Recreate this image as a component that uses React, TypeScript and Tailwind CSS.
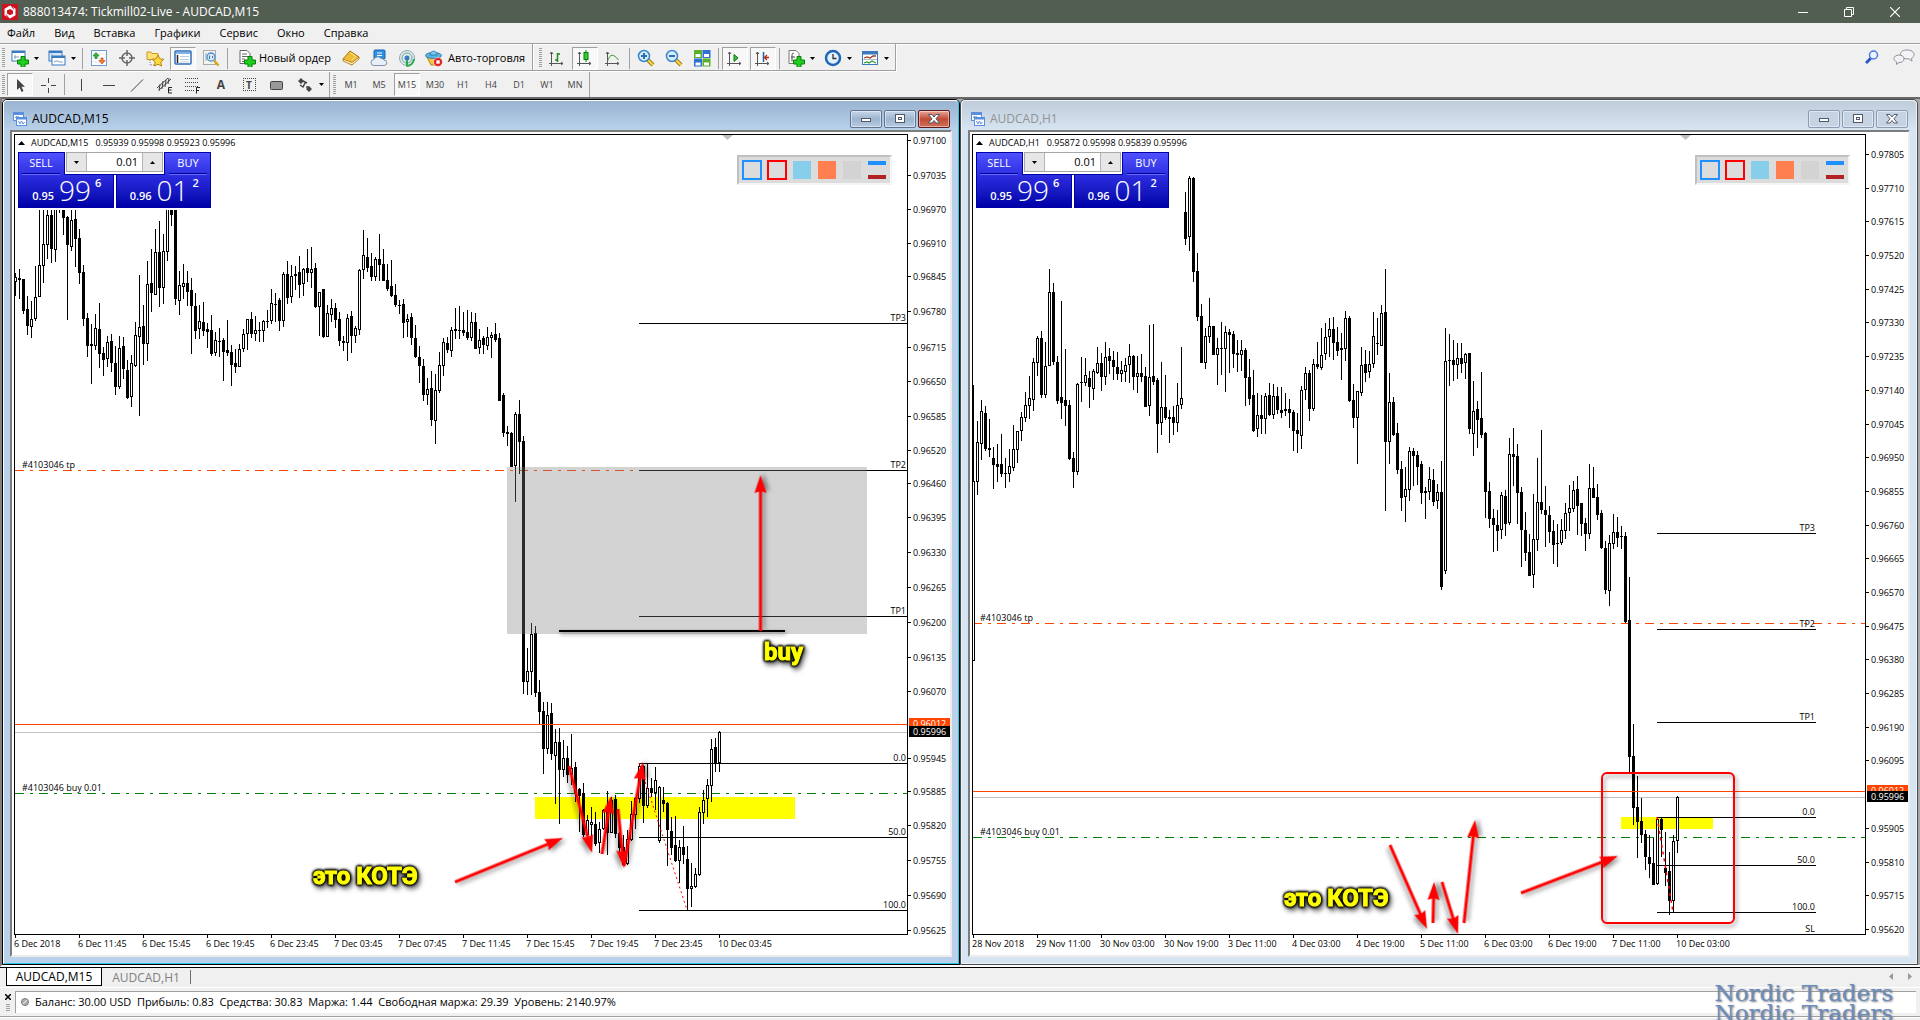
import type { ReactNode } from "react";

// [high, open, close, low] measured downwards in thirds of a pixel
type Bar = [number, number, number, number];
type Segment = { top: number; bars: Bar[] };
type Point = [number, number];

const M15_BARS: Segment[] = [
  {
    top: 200,
    bars: [
      [219, 247, 232, 288], [207, 235, 239, 296], [237, 238, 332, 341], [288, 327, 378, 405], [303, 380, 358, 414],
      [198, 356, 291, 362], [-20, 290, 195, 290], [-20, 197, 132, 249], [-20, 134, 45, 178], [-20, 45, 146, 188],
      [-20, 149, -20, 185], [-40, -30, -10, 39], [-40, -10, 55, 105], [48, 50, 134, 360], [-20, 140, 60, 152],
      [-20, 57, 116, 200], [87, 114, 218, 252], [195, 216, 356, 378], [339, 354, 437, 470], [372, 432, 438, 552],
      [342, 437, 384, 450], [309, 387, 461, 504], [441, 459, 480, 528], [408, 476, 426, 500], [402, 423, 490, 515],
      [438, 489, 560, 585], [408, 560, 444, 567], [411, 438, 507, 537], [480, 510, 594, 597], [465, 590, 489, 621],
      [366, 498, 405, 501], [225, 410, 381, 648], [315, 378, 432, 495], [183, 431, 252, 483], [147, 249, 278, 336],
      [87, 284, 156, 285], [63, 156, 264, 321], [102, 263, 153, 312], [-20, 155, -20, 183], [-20, -20, 45, 78],
      [-20, -20, 297, 315], [213, 302, 255, 345], [192, 261, 249, 297], [213, 249, 276, 318], [234, 270, 318, 462],
      [279, 318, 392, 417], [315, 388, 363, 417], [306, 366, 394, 408], [369, 387, 396, 444], [345, 390, 462, 468],
      [396, 459, 420, 468], [384, 423, 427, 472], [414, 420, 457, 543], [360, 450, 460, 468], [435, 456, 495, 558],
      [447, 489, 501, 519], [432, 500, 447, 501], [387, 446, 402, 456], [357, 401, 357, 450], [336, 357, 402, 414],
      [348, 402, 390, 423], [366, 390, 394, 426], [360, 392, 363, 426], [330, 362, 366, 384], [267, 362, 309, 372],
      [279, 311, 315, 366], [294, 300, 363, 393], [216, 362, 222, 381], [183, 222, 293, 312], [195, 290, 228, 309],
      [198, 222, 227, 270], [168, 216, 254, 294], [204, 251, 207, 288], [147, 204, 218, 246], [141, 218, 207, 264],
      [189, 204, 320, 324], [276, 320, 276, 408], [267, 267, 411, 414], [315, 410, 339, 411], [297, 344, 324, 366],
      [309, 324, 359, 384], [336, 357, 423, 438], [408, 423, 428, 453], [342, 428, 354, 483], [333, 348, 408, 459],
      [378, 407, 384, 429], [207, 389, 210, 405], [90, 209, 165, 237], [114, 171, 204, 216], [159, 198, 231, 243],
      [171, 230, 177, 243], [102, 177, 194, 243], [147, 192, 242, 242], [192, 240, 266, 273], [180, 258, 287, 290],
      [252, 285, 315, 321], [300, 315, 319, 342], [297, 312, 369, 414], [342, 365, 357, 411], [339, 351, 414, 435],
      [375, 414, 471, 474], [438, 471, 498, 549], [477, 498, 585, 603], [534, 584, 567, 615], [513, 564, 660, 678],
      [522, 662, 570, 732], [456, 572, 495, 579], [414, 497, 426, 528], [411, 429, 450, 460], [381, 452, 390, 471],
      [324, 387, 392, 417], [318, 390, 393, 417], [336, 390, 398, 408], [330, 396, 414, 420], [336, 413, 366, 423],
      [339, 366, 446, 447], [387, 444, 420, 462], [408, 414, 435, 462], [381, 437, 411, 450], [396, 413, 405, 474],
      [369, 402, 420, 426], [399, 414, 603, 603], [579, 585, 699, 711], [678, 696, 701, 738], [696, 699, 800, 800],
      [636, 797, 642, 906], [600, 642, 725, 822],
    ],
  },
  {
    top: 400,
    bars: [
      [108, 123, 846, 882], [744, 846, 813, 885], [669, 815, 702, 885], [678, 699, 879, 891], [840, 876, 936, 975],
    ],
  },
  {
    top: 690,
    bars: [
      [36, 63, 178, 252], [36, 177, 75, 192], [39, 69, 192, 210], [117, 197, 156, 342], [114, 156, 240, 402],
      [150, 239, 204, 261], [168, 204, 255, 279], [132, 254, 234, 285], [216, 231, 310, 335], [294, 297, 318, 426],
      [279, 309, 436, 440], [375, 434, 390, 450], [351, 404, 396, 450], [366, 402, 462, 468], [396, 460, 417, 488],
      [357, 416, 360, 420], [303, 355, 430, 494], [320, 428, 330, 430], [315, 327, 432, 444], [425, 430, 475, 500],
      [435, 470, 525, 525], [420, 521, 447, 525], [333, 449, 372, 453], [320, 374, 325, 417], [222, 328, 228, 340],
      [225, 228, 347, 399], [222, 347, 294, 353], [264, 294, 309, 321], [231, 308, 270, 360], [288, 452, 291, 459],
      [291, 330, 342, 366], [336, 339, 420, 528], [381, 423, 474, 495], [378, 465, 513, 516], [450, 512, 471, 579],
      [408, 471, 495, 522], [468, 507, 597, 660], [519, 598, 588, 651], [534, 590, 552, 594], [351, 554, 366, 557],
      [300, 368, 330, 402], [267, 328, 285, 381], [147, 287, 177, 336], [144, 171, 221, 246], [123, 220, 126, 246],
    ],
  },
];

const H1_BARS: Segment[] = [
  {
    top: 170,
    bars: [
      [645, 1473, 933, 1473], [753, 936, 816, 975], [690, 822, 723, 870], [708, 729, 837, 843], [747, 834, 839, 861],
      [831, 864, 885, 957], [822, 882, 891, 936], [792, 882, 911, 921], [864, 909, 912, 954], [837, 911, 888, 936],
      [765, 893, 837, 903], [783, 839, 783, 879], [726, 782, 741, 813], [666, 743, 705, 756], [618, 707, 684, 747],
      [564, 689, 576, 723], [498, 578, 504, 618], [483, 504, 675, 684], [516, 674, 588, 684], [297, 587, 366, 587],
      [339, 366, 576, 585], [558, 576, 693, 702], [393, 681, 699, 747], [537, 690, 708, 768], [690, 705, 867, 870],
      [846, 864, 906, 954], [639, 906, 642, 915], [561, 636, 639, 696], [564, 638, 615, 648], [603, 624, 651, 714],
      [597, 656, 603, 690], [531, 608, 579, 612], [549, 579, 621, 663], [516, 620, 561, 645], [534, 558, 573, 612],
      [543, 570, 591, 630], [546, 591, 612, 630], [573, 612, 600, 636], [564, 606, 585, 636], [522, 584, 558, 639],
      [555, 558, 621, 660], [558, 620, 609, 669], [552, 609, 621, 636], [591, 618, 711, 711], [465, 707, 621, 738],
      [462, 618, 636, 645], [624, 630, 762, 849], [576, 758, 711, 795], [615, 711, 743, 750], [720, 741, 747, 819],
      [708, 741, 759, 795], [639, 758, 705, 786], [531, 704, 684, 717], [66, 126, 207, 225], [18, 200, 24, 243],
      [21, 24, 306, 336], [249, 303, 441, 453], [402, 438, 579, 579], [474, 578, 498, 597], [384, 500, 468, 519],
      [468, 468, 555, 555], [504, 554, 534, 645], [456, 534, 537, 615], [468, 536, 486, 666], [477, 486, 495, 609],
      [483, 492, 552, 594], [510, 549, 555, 606], [510, 556, 540, 603], [534, 540, 624, 708], [567, 621, 687, 705],
      [600, 675, 783, 786], [669, 776, 735, 801], [675, 735, 747, 792], [669, 746, 678, 792], [639, 675, 735, 738],
      [642, 734, 678, 747], [651, 678, 720, 732], [651, 720, 729, 744], [669, 724, 717, 738], [687, 717, 729, 774],
      [720, 726, 783, 843], [729, 780, 792, 849], [648, 798, 660, 837], [591, 659, 609, 690], [600, 609, 717, 753],
      [567, 716, 582, 723], [516, 582, 591, 597], [474, 594, 555, 600], [459, 551, 501, 570], [444, 500, 477, 561],
      [441, 477, 519, 570], [471, 516, 543, 558], [489, 534, 540, 630], [423, 536, 444, 573], [438, 444, 693, 696],
      [642, 690, 744, 774], [663, 743, 663, 882], [531, 668, 585, 678], [540, 582, 609, 636], [543, 605, 582, 624],
      [426, 581, 498, 594], [444, 519, 522, 555], [405, 527, 429, 527], [297, 426, 816, 1023], [609, 815, 696, 882],
      [681, 696, 795, 798], [759, 789, 900, 912], [873, 897, 984, 1023], [891, 980, 957, 1056], [831, 959, 843, 993],
      [834, 843, 858, 948], [843, 855, 891, 945], [873, 882, 969, 1002], [951, 963, 968, 1047], [891, 965, 927, 990],
      [897, 930, 996, 1008], [942, 992, 966, 1017],
    ],
  },
  {
    top: 280,
    bars: [
      [543, 636, 921, 930], [144, 872, 243, 882], [162, 240, 243, 318], [180, 240, 255, 303], [189, 254, 234, 297],
      [189, 234, 252, 279], [219, 248, 222, 297], [219, 219, 447, 462], [303, 461, 393, 528], [363, 387, 420, 504],
      [276, 414, 465, 474], [456, 459, 636, 714], [606, 633, 717, 744], [687, 714, 735, 816], [690, 735, 753, 813],
      [636, 749, 645, 777], [630, 648, 732, 768], [474, 728, 522, 735], [444, 522, 531, 618], [492, 528, 639, 732],
      [621, 636, 750, 861], [696, 750, 819, 843], [762, 816, 888, 888], [642, 884, 777, 924], [534, 779, 666, 813],
      [450, 666, 690, 702], [618, 690, 705, 801], [678, 705, 756, 789], [720, 753, 795, 852], [732, 789, 792, 861],
      [717, 788, 750, 795], [669, 752, 699, 777], [615, 700, 684, 753], [603, 686, 630, 696], [588, 627, 678, 765],
      [669, 669, 732, 768], [714, 729, 762, 813], [552, 761, 624, 777], [561, 624, 654, 654], [612, 651, 705, 720],
      [690, 699, 804, 807], [783, 804, 930, 942], [765, 932, 789, 978], [702, 791, 756, 807], [711, 756, 774, 801],
      [738, 768, 771, 807], [756, 768, 1026, 1030], [891, 1020, 1431, 1476],
    ],
  },
  {
    top: 640,
    bars: [
      [252, 348, 504, 555], [408, 501, 546, 654], [474, 543, 585, 609], [570, 582, 651, 690], [585, 651, 672, 714],
      [594, 669, 735, 735], [532, 731, 537, 735], [532, 537, 570, 651], [576, 684, 699, 738], [636, 693, 782, 825],
      [585, 782, 603, 815], [468, 604, 471, 639],
    ],
  },
];

type ChartData = {
  symbol: string;
  quote: string;
  left: number;
  segments: Segment[];
  prices: [string, number][];
  ask: number;
  bid: number;
  tp: number;
  entry: number;
  levels: [string, number][];
  levelFrom: number;
  levelTo: number;
  times: string[];
};

const M15: ChartData = {
  symbol: "AUDCAD,M15",
  quote: "0.95939 0.95998 0.95923 0.95996",
  left: 15,
  segments: M15_BARS,
  prices: [
    ["0.97100", 141], ["0.97035", 176], ["0.96970", 210], ["0.96910", 244], ["0.96845", 277], ["0.96780", 312],
    ["0.96715", 348], ["0.96650", 382], ["0.96585", 417], ["0.96520", 451], ["0.96460", 484], ["0.96395", 518],
    ["0.96330", 553], ["0.96265", 588], ["0.96200", 623], ["0.96135", 658], ["0.96070", 692], ["0.95945", 759],
    ["0.95885", 792], ["0.95820", 826], ["0.95755", 861], ["0.95690", 896], ["0.95625", 931],
  ],
  ask: 724,
  bid: 732,
  tp: 470,
  entry: 793,
  levels: [["TP3", 323], ["TP2", 470], ["TP1", 616], ["0.0", 763], ["50.0", 837], ["100.0", 910]],
  levelFrom: 639,
  levelTo: 907,
  times: [
    "6 Dec 2018", "6 Dec 11:45", "6 Dec 15:45", "6 Dec 19:45", "6 Dec 23:45", "7 Dec 03:45",
    "7 Dec 07:45", "7 Dec 11:45", "7 Dec 15:45", "7 Dec 19:45", "7 Dec 23:45", "10 Dec 03:45",
  ],
};

const H1: ChartData = {
  symbol: "AUDCAD,H1",
  quote: "0.95872 0.95998 0.95839 0.95996",
  left: 973,
  segments: H1_BARS,
  prices: [
    ["0.97805", 155], ["0.97710", 189], ["0.97615", 222], ["0.97520", 256], ["0.97425", 290], ["0.97330", 323],
    ["0.97235", 357], ["0.97140", 391], ["0.97045", 425], ["0.96950", 458], ["0.96855", 492], ["0.96760", 526],
    ["0.96665", 559], ["0.96570", 593], ["0.96475", 627], ["0.96380", 660], ["0.96285", 694], ["0.96190", 728],
    ["0.96095", 761], ["0.95905", 829], ["0.95810", 863], ["0.95715", 896], ["0.95620", 930],
  ],
  ask: 791,
  bid: 797,
  tp: 623,
  entry: 837,
  levels: [["TP3", 533], ["TP2", 629], ["TP1", 722], ["0.0", 817], ["50.0", 865], ["100.0", 912], ["SL", 934]],
  levelFrom: 1657,
  levelTo: 1816,
  times: [
    "28 Nov 2018", "29 Nov 11:00", "30 Nov 03:00", "30 Nov 19:00", "3 Dec 11:00", "4 Dec 03:00",
    "4 Dec 19:00", "5 Dec 11:00", "6 Dec 03:00", "6 Dec 19:00", "7 Dec 11:00", "10 Dec 03:00",
  ],
};

const TOP = 135;

function Candles({ segments, left }: { segments: Segment[]; left: number }) {
  const bars = segments.flatMap((s) =>
    s.bars.map((bar) => bar.map((v) => s.top + Math.round(v / 3)) as Bar)
  );
  return (
    <g shapeRendering="crispEdges">
      {bars.map(([high, open, close, low], i) => {
        const x = left + i * 4;
        const top = Math.min(open, close);
        const height = Math.max(1, Math.abs(close - open));
        return (
          <g key={i}>
            <rect x={x} y={high} width={1} height={Math.max(1, low - high)} />
            <rect x={x - 1} y={top} width={3} height={height} />
            {close < open && height > 2 && (
              <rect x={x} y={top + 1} width={1} height={height - 2} fill="#fff" />
            )}
          </g>
        );
      })}
    </g>
  );
}

function Arrow({ from, to }: { from: Point; to: Point }) {
  const dx = to[0] - from[0];
  const dy = to[1] - from[1];
  const len = Math.hypot(dx, dy);
  const angle = (Math.atan2(dy, dx) * 180) / Math.PI;
  return (
    <g
      transform={`translate(${from[0]} ${from[1]}) rotate(${angle})`}
      fill="#f00"
      className="drop-shadow-[2px_3px_2px_rgba(0,0,0,0.4)]"
    >
      <rect x={0} y={-1.5} width={len - 14} height={3} />
      <path d={`M${len} 0 L${len - 18} -6 L${len - 16} 0 L${len - 18} 6 Z`} />
    </g>
  );
}

function Note({ x, y, children }: { x: number; y: number; children: string }) {
  return (
    <text
      x={x}
      y={y}
      fill="#ff0"
      stroke="#ff0"
      strokeWidth={1}
      className="text-[24px] font-bold font-['Liberation_Sans_Narrow','Roboto',sans-serif] [filter:drop-shadow(0_0_1px_#000)_drop-shadow(0_0_1px_#000)_drop-shadow(0_0_1px_#000)_drop-shadow(2px_3px_2px_#0008)]"
    >
      {children}
    </text>
  );
}

function Plot({ data, back, children }: { data: ChartData; back: ReactNode; children: ReactNode }) {
  const dash = { strokeDasharray: "9 6 3 6" };
  const y = (v: number) => v + 0.5;
  return (
    <svg className="absolute inset-0 h-full w-full" role="img" aria-label={data.symbol}>
      <g transform={`translate(${-data.left} ${-TOP})`}>
        <g shapeRendering="crispEdges">
          <path d={`M${data.left} ${y(data.tp)}h892`} stroke="#ff4500" {...dash} />
          <path d={`M${data.left} ${y(data.entry)}h892`} stroke="#008000" {...dash} />
          {back}
          <path d={`M${data.left} ${y(data.bid)}h892`} stroke="#c0c0c0" />
        </g>
        <path d={`M${data.left + 707} 135h11l-5.5 5z`} fill="#c0c0c0" />
        <Candles segments={data.segments} left={data.left} />
        <g shapeRendering="crispEdges">
          <path d={`M${data.left} ${y(data.ask)}h892`} stroke="#ff4500" />
          {data.levels.map(([name, v]) => (
            <path key={name} d={`M${data.levelFrom} ${y(v)}H${data.levelTo}`} stroke="#000" />
          ))}
        </g>
        <g className="text-[9px]">
          {data.levels.map(([name, v]) => (
            <text key={name} x={data.levelTo - 1} y={v - 2} textAnchor="end">{name}</text>
          ))}
          <text x={data.left + 7} y={data.tp - 2}>#4103046 tp</text>
          <text x={data.left + 7} y={data.entry - 2}>#4103046 buy 0.01</text>
        </g>
        {children}
      </g>
    </svg>
  );
}

function PriceAxis({ data }: { data: ChartData }) {
  return (
    <svg className="h-full w-[42px] shrink-0 overflow-visible text-[9px]">
      <g transform={`translate(0 ${-TOP})`}>
        {data.prices.map(([label, v]) => (
          <g key={label}>
            <rect x={0} y={v} width={3} height={1} />
            <text x={5} y={v + 4}>{label}</text>
          </g>
        ))}
        <rect x={1} y={data.ask - 5} width={41} height={13} fill="#ff4500" />
        <text x={5} y={data.ask + 4} fill="#fff">0.96012</text>
        <rect x={1} y={data.bid - 5} width={41} height={11} />
        <text x={5} y={data.bid + 4} fill="#fff">0.95996</text>
      </g>
    </svg>
  );
}

function TimeAxis({ times }: { times: string[] }) {
  return (
    <svg className="block h-[20px] w-full text-[9px]">
      {times.map((t, i) => (
        <g key={t}>
          <rect x={i * 64 + 1} y={0} width={1} height={3} />
          <text x={i * 64} y={12}>{t}</text>
        </g>
      ))}
    </svg>
  );
}

function PriceButton({ side, small, big, sup }: { side: "SELL" | "BUY"; small: string; big: string; sup: string }) {
  return (
    <button
      className={`relative flex h-[56px] flex-1 flex-col border border-[#0000a8] bg-linear-to-b from-[#5050ff] via-[#2626d8] to-[#0000a6] text-white ${
        side === "BUY" ? "items-end" : "items-start"
      }`}
    >
      <span className="w-[44px] text-center text-[11px] leading-[20px]">{side}</span>
      <span className="mx-[3px] h-[2px] w-[38px] border-t border-[#0000a0] bg-[#6a6aff]" />
      <span className="flex h-[32px] w-full items-end justify-center pb-[4px] pl-[2px]">
        <b className="text-[11px] leading-[14px] font-semibold">{small}</b>
        <span className="ml-[5px] text-[28px] leading-[26px] font-light">{big}</span>
        <b className="ml-[4px] self-start text-[11px] leading-[16px] font-semibold">{sup}</b>
      </span>
    </button>
  );
}

function OneClick({ data }: { data: ChartData }) {
  return (
    <div className="absolute top-0 left-0 pl-[3px]">
      <div className="flex h-[17px] items-center gap-[6px] pb-px text-[9px] leading-[12px] whitespace-pre">
        <svg width="7" height="4"><path d="M3.500 0L7 4H0z" /></svg>
        <span>{data.symbol}{"   "}{data.quote}</span>
      </div>
      <div className="relative flex w-[193px] gap-[2px] bg-white pb-[2px]">
        <PriceButton side="SELL" small="0.95" big="99" sup="6" />
        <PriceButton side="BUY" small="0.96" big="01" sup="2" />
        <div className="absolute top-0 left-[46px] h-[23px] w-[101px] border-x border-b border-[#0000a8] bg-white px-px pb-[2px]">
          <div className="flex h-full border border-[#a8a8a8] bg-white">
            <button aria-label="Decrease volume" className="flex w-[19px] items-center justify-center bg-[#e6e6e6]">
              <svg width="5" height="3"><path d="M0 0h5L2.500 3z" /></svg>
            </button>
            <input aria-label="Volume" defaultValue="0.01" className="w-0 flex-1 border-x border-[#b4b4b4] px-[4px] text-right text-[11px] leading-[16px]" />
            <button aria-label="Increase volume" className="flex w-[19px] items-center justify-center bg-[#e6e6e6]">
              <svg width="5" height="3"><path d="M2.500 0L5 3H0z" /></svg>
            </button>
          </div>
        </div>
      </div>
    </div>
  );
}

function ShapePalette() {
  return (
    <div className="absolute top-[20px] right-[15px] flex gap-[5px] border-2 border-t-[#c0c0c0] border-r-[#f5f5f5] border-b-[#f5f5f5] border-l-[#c0c0c0] bg-[#dcdcdc] p-[3px]">
      <button aria-label="Blue frame" className="size-[20px] border-2 border-[#1e90ff]" />
      <button aria-label="Red frame" className="size-[20px] border-2 border-[#ff0000]" />
      <button aria-label="Sky box" className="size-[20px] p-px"><span className="block size-[18px] bg-[#87ceeb]" /></button>
      <button aria-label="Coral box" className="size-[20px] p-px"><span className="block size-[18px] bg-[#ff7f50]" /></button>
      <button aria-label="Gray box" className="size-[20px] p-px"><span className="block size-[18px] bg-[#d3d3d3]" /></button>
      <button aria-label="Levels" className="flex size-[20px] flex-col justify-between p-px">
        <span className="h-[4px] w-full bg-[#1e90ff]" />
        <span className="h-[4px] w-full bg-[#b22222]" />
      </button>
    </div>
  );
}

function ChartIcon() {
  return (
    <svg width="14" height="14" viewBox="0 0 14 14" fill="none" stroke="#5b8fdc">
      <rect x=".5" y=".5" width="10" height="8" fill="#fff" />
      <path d="M1 2h9" strokeWidth="2" />
      <path d="M2.500 6l1-2 1 2 1-2" />
      <rect x="3.500" y="5.500" width="10" height="8" fill="#fff" />
      <path d="M4 6.500h9" strokeWidth="2" />
      <path d="M5.500 9l1.500 3 1.500-3 1.500 3 1.500-2" />
    </svg>
  );
}

function FrameButton({ label, active, close, children }: { label: string; active: boolean; close?: boolean; children: ReactNode }) {
  const look = !active
    ? "border-[#8a9ab5] bg-[#c6d3e2]"
    : close
      ? "border-[#5c1a1a] bg-linear-to-b from-[#e5a79b] via-[#c04a33] to-[#d0705a]"
      : "border-[#5e7492] bg-linear-to-b from-[#c6d6e8] via-[#9db5d0] to-[#b8cce2]";
  return (
    <button aria-label={label} className={`flex h-[18px] w-[32px] items-center justify-center rounded-[2px] border shadow-[inset_0_0_0_1px_rgba(255,255,255,0.45)] ${look}`}>
      <svg width="12" height="10" viewBox="0 0 12 10" fill="#fff" stroke="#50586a">{children}</svg>
    </button>
  );
}

function ChartWindow({ data, active, back, children }: { data: ChartData; active: boolean; back: ReactNode; children: ReactNode }) {
  const frame = active ? "border-black" : "border-[#4a4a4a]";
  const inner = active
    ? "border-t-white border-l-white border-r-[#28c8e6] border-b-[#28c8e6] bg-[#b9d1ea]"
    : "border-[#eef4fa] bg-[#d7e4f2]";
  const bar = active ? "from-[#99b4d1] to-[#b9d1ea] text-black" : "from-[#bfcddb] to-[#d7e4f2] text-[#929292]";
  return (
    <section className={`flex min-w-0 flex-1 rounded-t-[5px] border ${frame}`}>
      <div className={`flex min-w-0 flex-1 flex-col rounded-t-[4px] border ${inner}`}>
        <header className={`flex h-[29px] shrink-0 items-center gap-[5px] rounded-t-[4px] bg-linear-to-b pt-[6px] pr-[8px] pl-[9px] ${bar}`}>
          <ChartIcon />
          <h2 className="flex-1 text-[12px] leading-[16px]">{data.symbol}</h2>
          <div className="flex gap-[2px]">
            <FrameButton label="Minimize chart" active={active}><rect x="1.500" y="4.500" width="9" height="3" /></FrameButton>
            <FrameButton label="Restore chart" active={active}>
              <rect x="1.500" y=".5" width="9" height="8" /><rect x="4.500" y="3.500" width="3" height="2" />
            </FrameButton>
            <FrameButton label="Close chart" active={active} close>
              <path d="M.5 .5h3.500l2 2.500 2-2.500h3.500l-3.500 4.300 3.500 4.200h-3.500l-2-2.500-2 2.500h-3.500l3.500-4.200z" />
            </FrameButton>
          </div>
        </header>
        <div className="mx-[6px] mb-[6px] flex min-h-0 flex-1 flex-col border-2 border-t-[#7c7c7c] border-r-[#ececec] border-b-[#ececec] border-l-[#7c7c7c] bg-white pt-[2px] pl-[2px]">
          <div className="flex min-h-0 flex-1">
            <div className="relative min-w-0 flex-1 overflow-hidden border border-black">
              <Plot data={data} back={back}>{children}</Plot>
              <OneClick data={data} />
              <ShapePalette />
            </div>
            <PriceAxis data={data} />
          </div>
          <TimeAxis times={data.times} />
        </div>
      </div>
    </section>
  );
}

function Grip() {
  return <div className="ml-[2px] h-[20px] w-[3px] bg-[repeating-linear-gradient(#a0a0a0_0_1px,transparent_1px_2px)]" />;
}

function Sep() {
  return <div className="mx-px h-[21px] w-px bg-[#a0a0a0]" />;
}

function Caret() {
  return <svg className="ml-[5px]" width="5" height="3"><path d="M0 0h5L2.500 3z" /></svg>;
}

function Tool({ label, pressed, menu, children }: { label: string; pressed?: boolean; menu?: boolean; children: ReactNode }) {
  return (
    <button
      aria-label={label}
      className={`flex h-[23px] items-center border ${menu ? "w-[35px] pl-[3px]" : "w-[26px] justify-center"} ${
        pressed ? "border-t-[#a0a0a0] border-r-white border-b-white border-l-[#a0a0a0] bg-[#f8f8f8]" : "border-transparent"
      }`}
    >
      {children}
      {menu && <Caret />}
    </button>
  );
}

function Icon({ children }: { children: ReactNode }) {
  return <svg className="shrink-0" width="18" height="18" viewBox="0 0 18 18" fill="none">{children}</svg>;
}

const plus = <path d="M10 7.500h4v3.500h3.500v4H14v3.500h-4V15H6.500v-4H10z" fill="#1fce1f" stroke="#0a7d0a" />;
const axes = <path d="M3.500 3v14M1 14.500h14M2 5l1.500-2L5 5M13 13l2 1.500L13 16" stroke="#555" />;

function ZoomIcon({ minus }: { minus?: boolean }) {
  return (
    <Icon>
      <path d="M11 11l5 5" stroke="#a87a12" strokeWidth="4" />
      <path d="M11 11l5 5" stroke="#ffd54a" strokeWidth="2" />
      <circle cx="7" cy="7" r="5.500" fill="#d3ecfb" stroke="#3a86c8" strokeWidth="1.500" />
      <path d={minus ? "M4 7h6" : "M4 7h6M7 4v6"} stroke="#2f6fb0" strokeWidth="2" />
    </Icon>
  );
}

function MainToolbar() {
  return (
    <div className="flex h-[28px] items-start">
      <div className="flex h-[27px] items-center gap-[2px] border-r border-b border-[#a0a0a0] pt-[2px] pr-[4px] shadow-[1px_1px_0_#fff]">
        <Grip />
        <Tool label="Новый график" menu>
          <Icon>
            <rect x="1" y="2" width="13" height="10" fill="#fff" stroke="#3a7bc0" /><path d="M1 3h13" stroke="#3a7bc0" strokeWidth="2" />
            <path d="M4 6v4M3 8h5" stroke="#7aa0c8" />{plus}
          </Icon>
        </Tool>
        <Tool label="Профили" menu>
          <Icon>
            <rect x="1" y="2" width="13" height="10" fill="#d8e8f8" stroke="#3a7bc0" /><path d="M1 3h13" stroke="#3a7bc0" strokeWidth="2" />
            <path d="M4 5v5M3 8h8" stroke="#7aa0c8" /><rect x="4" y="7" width="13" height="9" fill="#fff" stroke="#3a7bc0" />
            <path d="M4 8h13" stroke="#3a7bc0" strokeWidth="2" /><path d="M6 13l2-1h2l2 1h3" stroke="#7aa0c8" />
          </Icon>
        </Tool>
        <Sep />
        <Tool label="Обзор рынка">
          <Icon>
            <rect x="1.500" y="1.500" width="15" height="15" fill="#fff" stroke="#6aa0d4" /><path d="M2 5h14M2 9h14M2 13h14M9 2v14" stroke="#e0e8f0" />
            <path d="M6 3.500L9 7H7v2.500H5V7H3z" fill="#2fb52f" stroke="#0b7a0b" strokeWidth=".6" /><path d="M12 15l3-3.500h-2V9h-2v2.500H9z" fill="#ff7a3c" stroke="#c03c00" strokeWidth=".6" />
          </Icon>
        </Tool>
        <Tool label="Окно данных">
          <Icon><circle cx="9" cy="9" r="5" stroke="#666" strokeWidth="1.500" /><path d="M9 1v6M9 11v6M1 9h6M11 9h6" stroke="#666" strokeWidth="1.500" /></Icon>
        </Tool>
        <Tool label="Навигатор">
          <Icon>
            <path d="M1 3h4l1 1.500h6v6H1z" fill="#ffe07a" stroke="#c79a1e" /><path d="M4 11v5h4" stroke="#888" strokeDasharray="1 1" />
            <path d="M12 6l1.800 3.800 4 .5-3 2.800.8 4L12 15.200 8.400 17l.8-4-3-2.700 4-.5z" fill="#ffd93b" stroke="#b8860b" />
          </Icon>
        </Tool>
        <Tool label="Терминал" pressed>
          <Icon>
            <rect x="1" y="2" width="16" height="13" rx="1" fill="#fff" stroke="#2f6fb8" strokeWidth="1.500" /><path d="M2 4h14" stroke="#7fb2e6" strokeWidth="2" />
            <path d="M3.500 6v8" stroke="#222" strokeWidth="1.500" /><path d="M6 7.500h9M6 10.500h9M6 13h9" stroke="#b8cce4" />
          </Icon>
        </Tool>
        <Tool label="Тестер стратегий">
          <Icon>
            <rect x="1.500" y="1.500" width="12" height="14" fill="#f4f4ee" stroke="#aaa" /><path d="M4 4v8M11 4v4" stroke="#8ab" />
            <circle cx="9" cy="8" r="4" fill="#d5e9fa" fillOpacity=".8" stroke="#4f8fcc" strokeWidth="1.300" /><path d="M7.500 10V6.500M10.500 9V7" stroke="#3572b0" />
            <path d="M12 11.500l4.500 5" stroke="#d9a520" strokeWidth="2.500" />
          </Icon>
        </Tool>
        <Sep />
        <button className="flex h-[23px] items-center gap-[3px] pr-[5px] pl-[7px] text-[11px] leading-[16px] whitespace-nowrap">
          <Icon><path d="M2 1.500h7l3 3v10H2z" fill="#fff" stroke="#666" /><path d="M4 5h5M4 7.500h6M4 10h3M4 12.500h2" stroke="#666" />{plus}</Icon>
          Новый ордер
        </button>
        <Tool label="MetaEditor">
          <Icon><path d="M1 10L8 2l9 6-7 8z" fill="#f0bd3a" stroke="#a87408" /><path d="M1 10l9 3.500 7-5.500v2l-7 6-9-4z" fill="#fff1c2" stroke="#a87408" strokeWidth=".8" /><path d="M8 3.500l6 4-4 3.500" stroke="#ffe39a" /></Icon>
        </Tool>
        <Tool label="Маркет">
          <Icon><rect x="4" y="1" width="11" height="9" rx="1" fill="#2f8fe0" stroke="#1565b0" /><path d="M7 4h5M7 6.500h5" stroke="#fff" /><path d="M4 16.500a3 3 0 010-6 4 4 0 017-1 3 3 0 013 1.500 2.700 2.700 0 010 5.500z" fill="#e8eff7" stroke="#8294ad" /></Icon>
        </Tool>
        <Tool label="Сигналы">
          <Icon><circle cx="9" cy="9" r="7.500" fill="#dfe9ee" stroke="#8fa9ba" /><circle cx="9" cy="9" r="5" stroke="#6cae8a" /><circle cx="9" cy="9" r="2.500" fill="#3a79c4" /><path d="M9 11v6.500M9 17a8 8 0 007-7" stroke="#2fa84a" strokeWidth="2" /></Icon>
        </Tool>
        <button className="flex h-[23px] items-center gap-[5px] px-[3px] text-[11px] leading-[16px] whitespace-nowrap">
          <Icon><path d="M2 8l7-1 6 2-2 7H6z" fill="#f5c63c" stroke="#b58512" /><ellipse cx="8.500" cy="6.500" rx="8" ry="3" fill="#5ab4e0" stroke="#2a7fae" /><path d="M5 6c0-5 7-5 7 0z" fill="#7fcdf0" stroke="#2a7fae" /><circle cx="13" cy="13" r="4.500" fill="#e02020" stroke="#fff" strokeWidth=".6" /><rect x="11.300" y="11.300" width="3.400" height="3.400" fill="#fff" /></Icon>
          Авто-торговля
        </button>
      </div>
      <div className="flex h-[27px] items-center gap-[2px] border-r border-b border-[#a0a0a0] pt-[2px] pr-[3px] pl-[4px] shadow-[1px_1px_0_#fff]">
        <Grip />
        <Tool label="Бары"><Icon>{axes}<path d="M9.500 4v9M9.500 5h2.500M7 11h2.500" stroke="#1c8a1c" strokeWidth="1.500" /></Icon></Tool>
        <Tool label="Японские свечи" pressed><Icon>{axes}<path d="M10 1v12" stroke="#0b7a0b" /><rect x="8" y="3.500" width="4" height="7" fill="#2fd02f" stroke="#0b7a0b" /></Icon></Tool>
        <Tool label="Линия"><Icon>{axes}<path d="M3.500 12c3-8 6-7 11-1" stroke="#2f9a2f" /></Icon></Tool>
        <Sep />
        <Tool label="Увеличить"><ZoomIcon /></Tool>
        <Tool label="Уменьшить"><ZoomIcon minus /></Tool>
        <Tool label="Расположить окна">
          <Icon>
            <rect x="1" y="1" width="8" height="8" fill="#58b02c" /><rect x="9.500" y="1" width="8" height="8" fill="#2f6fd6" />
            <rect x="1" y="9.500" width="8" height="8" fill="#2f6fd6" /><rect x="9.500" y="9.500" width="8" height="8" fill="#58b02c" />
            <path d="M2.500 5h5v3h-5zM11 5h5v3h-5zM2.500 13.500h5v3h-5zM11 13.500h5v3h-5z" fill="#fff" />
          </Icon>
        </Tool>
        <Sep />
        <Tool label="Автопрокрутка" pressed><Icon>{axes}<path d="M8 5.500v7l4-3.500z" fill="#3cc03c" stroke="#0b7a0b" /></Icon></Tool>
        <Tool label="Сдвиг графика" pressed><Icon>{axes}<path d="M9.500 3v10" stroke="#1f5fb0" strokeWidth="1.500" /><path d="M15 8.500h-4M13 6l-2.500 2.500L13 11" stroke="#b03010" strokeWidth="1.300" /></Icon></Tool>
        <Sep />
        <Tool label="Индикаторы" menu>
          <Icon><path d="M2 1.500h7l3 3v10H2z" fill="#fff" stroke="#777" /><path d="M7 4.500c-2-1-2 1-2 3v5M4 8h4" stroke="#444" />{plus}</Icon>
        </Tool>
        <Tool label="Периоды" menu>
          <Icon><circle cx="9" cy="9" r="7" fill="#e4f1fc" stroke="#1d66b8" strokeWidth="2.500" /><path d="M9 5v4.500h3.500" stroke="#333" strokeWidth="1.300" /></Icon>
        </Tool>
        <Tool label="Шаблоны" menu>
          <Icon><rect x="1.500" y="2.500" width="15" height="13" fill="#fff" stroke="#3a7bc0" /><path d="M1 4h16" stroke="#3a7bc0" strokeWidth="3" /><path d="M3 9l3-1 3 1 3-2h3" stroke="#a03a20" strokeWidth="1.300" /><path d="M2 10.500h14" stroke="#bbb" /><path d="M3 14l3-1 2 1 3-2 4 2" stroke="#2f9a2f" strokeWidth="1.300" /></Icon>
        </Tool>
      </div>
      <div className="ml-auto flex h-[26px] items-center gap-[14px] pr-[5px]">
        <button aria-label="Поиск">
          <svg width="14" height="14" viewBox="0 0 14 14" fill="none"><path d="M6 8l-5 5" stroke="#2a56c8" strokeWidth="3" /><circle cx="8.500" cy="5" r="4" fill="#eef4ff" stroke="#4a7be0" strokeWidth="1.500" /></svg>
        </button>
        <button aria-label="Сообщения">
          <svg width="22" height="16" viewBox="0 0 22 16" fill="#f4f4f8" stroke="#909098"><path d="M14 1c4 0 7 1.700 7 4.500 0 1.800-1 3-2.500 3.700l.5 3-3-2.400c-5 .4-8.500-1.300-8.500-4.300S10 1 14 1z" /><path d="M6 6c3 0 5 1.500 5 3.800s-2 3.700-5 3.700l-2.500 2v-2.700C2 12 1 11 1 9.800 1 7.500 3 6 6 6z" /></svg>
        </button>
      </div>
    </div>
  );
}

function DrawToolbar() {
  const periods = ["M1", "M5", "M15", "M30", "H1", "H4", "D1", "W1", "MN"];
  return (
    <div className="flex h-[25px] items-center text-[#444]">
      <div className="flex h-full items-center gap-[2px] border-r border-[#a0a0a0] pr-[2px]">
        <Grip />
        <Tool label="Курсор" pressed><Icon><path d="M6 3v11l2.700-2.500L10.500 16l2-1-2-4.200H14z" fill="#444" /></Icon></Tool>
        <Tool label="Перекрестие"><Icon><path d="M9.500 2v5M9.500 12v5M2 9.500h5M12 9.500h5" stroke="#444" /></Icon></Tool>
        <Sep />
        <Tool label="Вертикальная линия"><Icon><path d="M9.500 3v12" stroke="#444" /></Icon></Tool>
        <Tool label="Горизонтальная линия"><Icon><path d="M3 9.500h12" stroke="#444" /></Icon></Tool>
        <Tool label="Трендовая линия"><Icon><path d="M3 15.500L15 3.500" stroke="#444" /></Icon></Tool>
        <Tool label="Канал">
          <Icon><path d="M1 12L12 2M3 14L15 3M4 8l-1 7M7 5l-1 8M10 4l-1 7M13 2l-1 6" stroke="#444" /><path d="M16 11.500h-3.500v5.500H16M12.500 14H15.500" stroke="#222" /></Icon>
        </Tool>
        <Tool label="Линии Фибоначчи">
          <Icon><path d="M1 2.500h14M1 6.500h14M1 10.500h14M1 14.500h9" stroke="#444" strokeDasharray="1 1" /><path d="M12.500 17.500v-6H16M12.500 14.500H15" stroke="#222" /></Icon>
        </Tool>
        <Tool label="Текст"><span className="text-[12px] leading-[16px] font-bold">A</span></Tool>
        <Tool label="Текстовая метка">
          <span className="relative flex size-[13px] items-center justify-center border border-dotted border-[#444] text-[10px] leading-[12px] font-bold">T</span>
        </Tool>
        <Tool label="Прямоугольник"><Icon><rect x="2.500" y="5.500" width="12" height="8" rx="1" fill="#999" stroke="#444" /></Icon></Tool>
        <Tool label="Стрелки" menu>
          <Icon><path d="M5 2l3 3-3 3-3-3zM13 10l3 3-3 3-3-3z" fill="#444" /><path d="M7 5l4 2M13 11h-3M4 9l3 2 2-4" stroke="#444" strokeWidth="1.500" /></Icon>
        </Tool>
      </div>
      <div className="flex h-full items-center gap-[2px] border-r border-[#a0a0a0] pr-px pl-px">
        <Grip />
        {periods.map((p) => (
          <Tool key={p} label={p} pressed={p === "M15"}>
            <span className="text-[9px] leading-[12px]">{p}</span>
          </Tool>
        ))}
      </div>
    </div>
  );
}

function TitleBar() {
  return (
    <header className="flex h-[23px] shrink-0 items-center bg-[#535e53] pl-[2px] text-white">
      <svg width="16" height="16" viewBox="0 0 16 16">
        <rect width="16" height="16" fill="#cc1420" />
        <path d="M8 1.500l5.500 3.200v6.600L8 14.500l-5.500-3.200V4.700z" fill="#fff" />
        <path d="M8 5l3 1.700v3L8 11.200 5 9.500v-3z" fill="#cc1420" />
        <path d="M9.500 2.500l2.500 3M6.500 13.500L4 10.500" stroke="#cc1420" />
      </svg>
      <h1 className="ml-[5px] flex-1 text-[12px] leading-[16px]">888013474: Tickmill02-Live - AUDCAD,M15</h1>
      <div className="flex h-[20px] items-center pr-[2px]">
        <button aria-label="Свернуть" className="flex w-[46px] justify-center"><svg width="10" height="10"><path d="M0 5.500h10" stroke="#fff" /></svg></button>
        <button aria-label="Развернуть" className="flex w-[46px] justify-center">
          <svg width="10" height="10" fill="none" stroke="#fff"><path d="M.5 2.500h7v7h-7zM2.500 2.500v-2h7v7h-2" /></svg>
        </button>
        <button aria-label="Закрыть" className="flex w-[46px] justify-center"><svg width="10" height="10"><path d="M0 0l10 10M10 0L0 10" stroke="#fff" strokeWidth="1.200" /></svg></button>
      </div>
    </header>
  );
}

export default function App() {
  const menu = ["Файл", "Вид", "Вставка", "Графики", "Сервис", "Окно", "Справка"];
  return (
    <div className="relative flex h-screen min-h-[600px] flex-col overflow-hidden bg-[#f0f0f0] font-['Open_Sans','Noto_Sans',sans-serif] text-black">
      <TitleBar />
      <nav className="flex h-[20px] shrink-0 items-center gap-[19px] pl-[7px] text-[11px] leading-[16px]">
        {menu.map((m) => (
          <button key={m}>{m}</button>
        ))}
      </nav>
      <div className="shrink-0 border-t border-[#a0a0a0] shadow-[inset_0_1px_0_#fff]">
        <MainToolbar />
        <DrawToolbar />
      </div>

      <main className="flex min-h-0 flex-1 border-t-2 border-b-2 border-l-2 border-t-[#696969] border-b-white border-l-[#808080] bg-[#a8a8a8] pr-[2px]">
        <ChartWindow
          data={M15}
          active
          back={<rect x={535} y={797} width={260} height={22} fill="#ff0" />}
        >
          <path d="M639 763L687 910" stroke="#f00" strokeDasharray="2 3" />
          <rect x={507} y={467} width={360} height={167} fill="#7e7e7e" fillOpacity={0.34} />
          <rect x={559} y={630} width={226} height={2} className="drop-shadow-[1px_2px_2px_rgba(0,0,0,0.5)]" />
          <Arrow from={[760.5, 631]} to={[760.5, 475]} />
          <Arrow from={[455, 882]} to={[563, 838]} />
          <Arrow from={[569, 766]} to={[592, 853]} />
          <Arrow from={[602, 854]} to={[611, 796]} />
          <Arrow from={[618, 809]} to={[624, 868]} />
          <Arrow from={[624, 866]} to={[643, 762]} />
          <Note x={764} y={660}>buy</Note>
          <Note x={313} y={884}>это КОТЭ</Note>
        </ChartWindow>
        <ChartWindow
          data={H1}
          active={false}
          back={<rect x={1621} y={817} width={92} height={12} fill="#ff0" />}
        >
          <path d="M1657 817L1673 912" stroke="#f00" strokeWidth={1.5} strokeDasharray="3 4" />
          <rect x={1602} y={773} width={132} height={150} rx={5} fill="none" stroke="#f00" strokeWidth={2} className="drop-shadow-[2px_3px_2px_rgba(0,0,0,0.4)]" />
          <Arrow from={[1390, 845]} to={[1427, 929]} />
          <Arrow from={[1433, 923]} to={[1434, 882]} />
          <Arrow from={[1442, 882]} to={[1458, 934]} />
          <Arrow from={[1464, 923]} to={[1475, 820]} />
          <Arrow from={[1521, 893]} to={[1618, 856]} />
          <Note x={1284} y={906}>это КОТЭ</Note>
        </ChartWindow>
      </main>

      <footer className="shrink-0">
        <div className="flex h-[20px] items-start border-t border-black pl-[6px] text-[12px] leading-[17px]">
          <button className="h-[18px] w-[96px] border border-t-0 border-black bg-white">AUDCAD,M15</button>
          <button className="h-[18px] w-[88px] text-[#808080]">AUDCAD,H1</button>
          <span className="mt-[2px] h-[14px] w-px bg-[#707070]" />
          <div className="mt-[5px] mr-[8px] ml-auto flex gap-[15px]">
            <button aria-label="Назад"><svg className="block" width="4" height="7"><path d="M4 0v7L0 3.500z" fill="#999" /></svg></button>
            <button aria-label="Вперёд"><svg className="block" width="4" height="7"><path d="M0 0v7l4-3.500z" fill="#999" /></svg></button>
          </div>
        </div>
        <div className="flex border-t border-white pt-[3px]">
          <div className="flex w-[15px] flex-col items-center pt-[3px]">
            <button aria-label="Закрыть терминал"><svg className="block" width="6" height="6"><path d="M0 0l6 6M6 0L0 6" stroke="#000" strokeWidth="1.500" /></svg></button>
            <div className="mt-[4px] h-[8px] w-[4px] bg-[repeating-linear-gradient(#a0a0a0_0_1px,transparent_1px_2px)]" />
          </div>
          <div className="mr-[4px] flex h-[22px] flex-1 items-center border-t border-l border-[#a0a0a0] bg-white pb-[2px] pl-[5px] text-[11px] leading-[16px]">
            <svg className="mr-[6px]" width="8" height="8"><circle cx="4" cy="4" r="3.500" fill="#b0b0b0" stroke="#777" /><path d="M2 6l4-4" stroke="#eee" /></svg>
            <p className="whitespace-pre">
              {"Баланс: 30.00 USD  Прибыль: 0.83  Средства: 30.83  Маржа: 1.44  Свободная маржа: 29.39  Уровень: 2140.97%"}
            </p>
          </div>
        </div>
        <div className="mt-[3px] h-[4px] border-t border-[#a0a0a0] shadow-[inset_0_1px_0_#fff]" />
      </footer>

      <div className="pointer-events-none absolute right-[27px] bottom-[-3px] font-['DejaVu_Serif',serif] text-[23px] leading-[20px] text-[#6a8cbe] [text-shadow:1px_1px_2px_#777]">
        <div>Nordic Traders</div>
        <div>Nordic Traders</div>
      </div>
    </div>
  );
}
